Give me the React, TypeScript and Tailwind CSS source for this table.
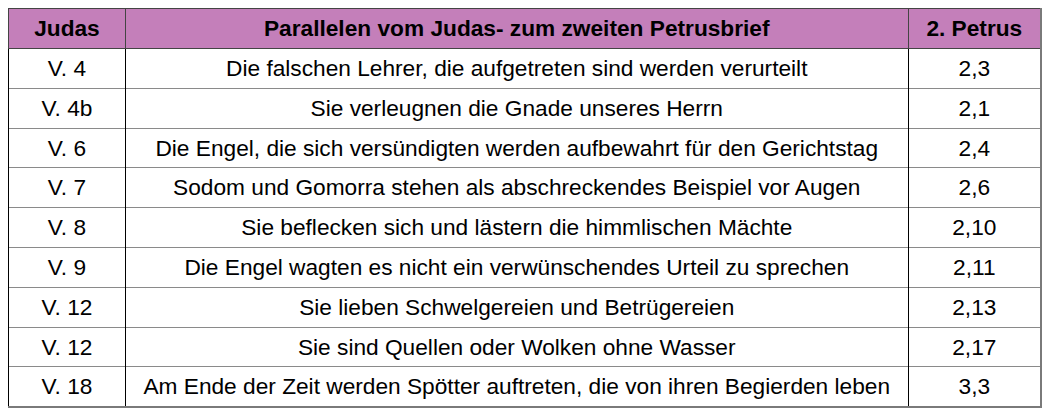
import React from 'react'

type Row = { judas: string; text: string; petrus: string }

const rows: Row[] = [
  { judas: 'V. 4', text: 'Die falschen Lehrer, die aufgetreten sind werden verurteilt', petrus: '2,3' },
  { judas: 'V. 4b', text: 'Sie verleugnen die Gnade unseres Herrn', petrus: '2,1' },
  { judas: 'V. 6', text: 'Die Engel, die sich versündigten werden aufbewahrt für den Gerichtstag', petrus: '2,4' },
  { judas: 'V. 7', text: 'Sodom und Gomorra stehen als abschreckendes Beispiel vor Augen', petrus: '2,6' },
  { judas: 'V. 8', text: 'Sie beflecken sich und lästern die himmlischen Mächte', petrus: '2,10' },
  { judas: 'V. 9', text: 'Die Engel wagten es nicht ein verwünschendes Urteil zu sprechen', petrus: '2,11' },
  { judas: 'V. 12', text: 'Sie lieben Schwelgereien und Betrügereien', petrus: '2,13' },
  { judas: 'V. 12', text: 'Sie sind Quellen oder Wolken ohne Wasser', petrus: '2,17' },
  { judas: 'V. 18', text: 'Am Ende der Zeit werden Spötter auftreten, die von ihren Begierden leben', petrus: '3,3' },
]

const App: React.FC = () => {
  return (
    <div className="w-[1049px] h-[416px] bg-white pt-[8px] pl-[8px] font-['Liberation_Sans',Arial,sans-serif] text-black">
      <table className="w-[1034px] border-collapse border-r-2 border-b-2 border-r-[#7a7a7a] border-b-[#7a7a7a] text-[22.7px] leading-none">
        <colgroup>
          <col className="w-[117px]" />
          <col className="w-[784px]" />
          <col className="w-[133px]" />
        </colgroup>
        <thead>
          <tr className="h-[40px] bg-[#c47fba] font-bold">
            <th className="border border-[#444] text-center">Judas</th>
            <th className="border border-[#444] text-center">Parallelen vom Judas- zum zweiten Petrusbrief</th>
            <th className="border border-[#444] border-r-[#7a7a7a] text-center">2. Petrus</th>
          </tr>
        </thead>
        <tbody>
          {rows.map((r, i) => (
            <tr key={i} className="h-[39.8px]">
              <td className="border-l border-r border-l-black border-r-black border-t border-t-[#8a8a8a] text-center">{r.judas}</td>
              <td className="border-r border-r-black border-t border-t-[#8a8a8a] text-center">{r.text}</td>
              <td className="border-t border-t-[#8a8a8a] text-center">{r.petrus}</td>
            </tr>
          ))}
        </tbody>
      </table>
    </div>
  )
}

export default App
